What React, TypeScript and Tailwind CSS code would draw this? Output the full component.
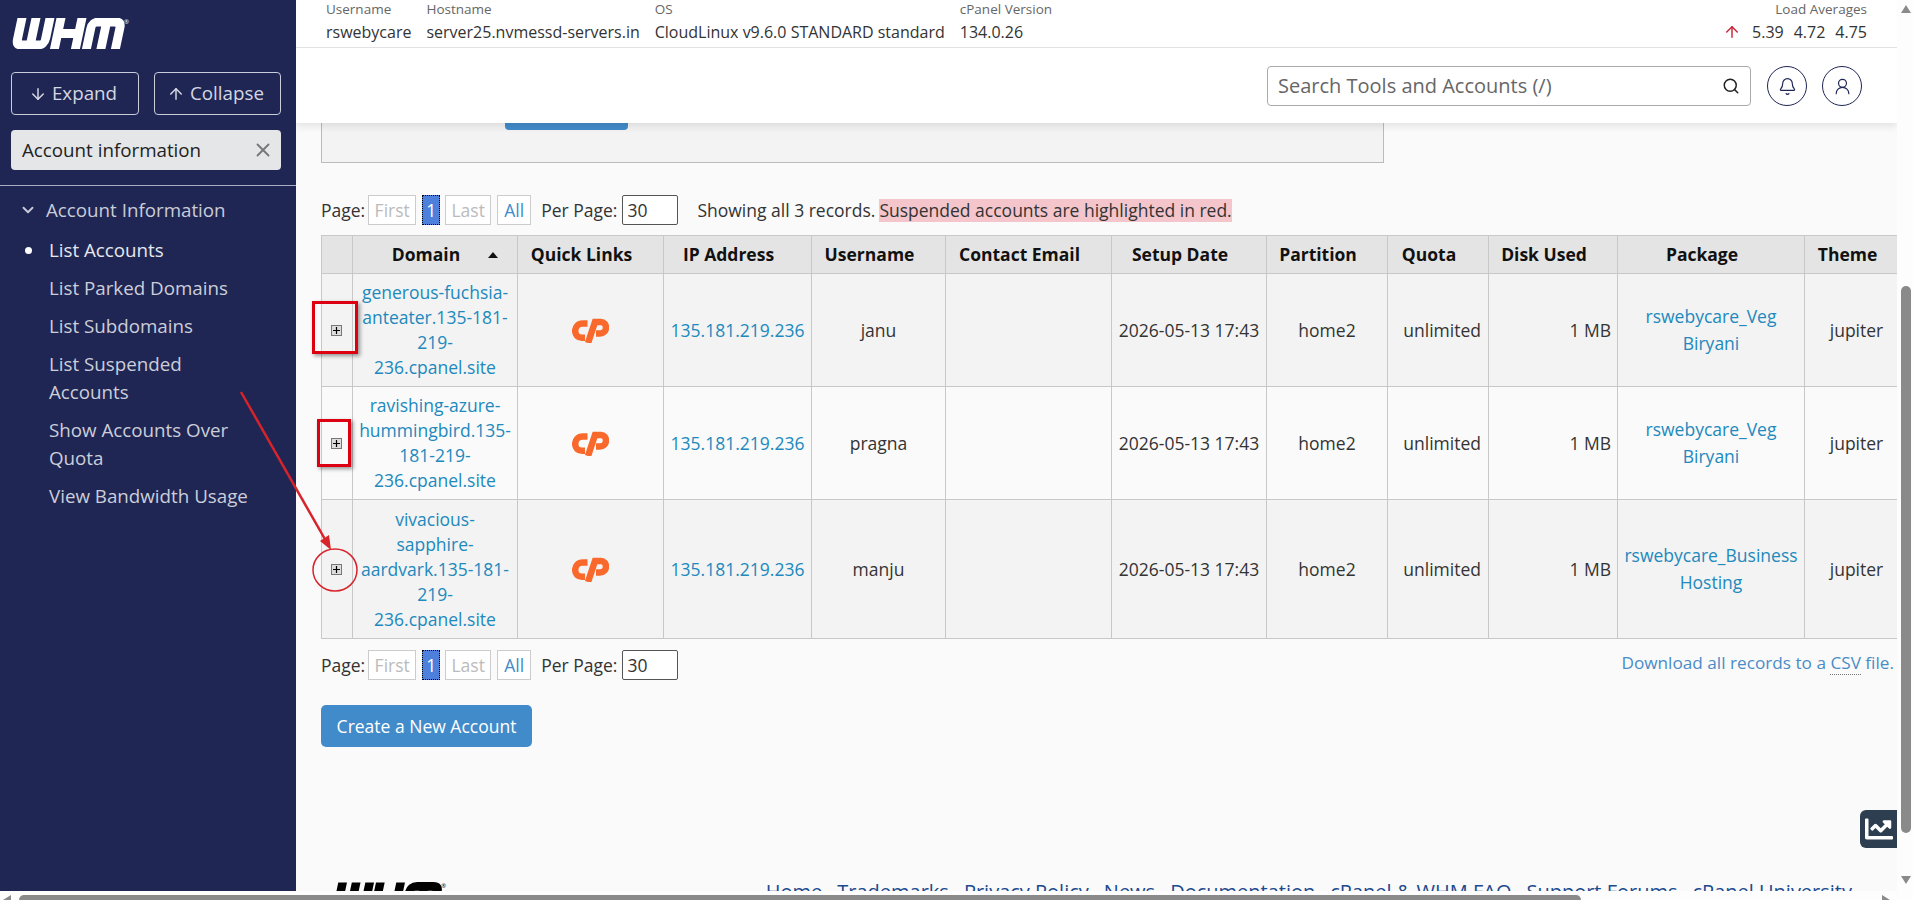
import { ArrowDown, ArrowUp, Bell, ChevronDown, Search, UserRound, X } from "lucide-react"
import { FaChartLine } from "react-icons/fa"

const rows = [
  { domain: "generous-fuchsia-anteater.135-181-219-236.cpanel.site", user: "janu", pkg: "rswebycare_Veg Biryani", bg: "bg-[#f3f3f3]", h: "h-[113px]" },
  { domain: "ravishing-azure-hummingbird.135-181-219-236.cpanel.site", user: "pragna", pkg: "rswebycare_Veg Biryani", bg: "bg-[#fafafa]", h: "h-[113px]" },
  { domain: "vivacious-sapphire-aardvark.135-181-219-236.cpanel.site", user: "manju", pkg: "rswebycare_Business Hosting", bg: "bg-[#f3f3f3]", h: "h-[139px]" },
]

const menu = ["List Parked Domains", "List Subdomains", "List Suspended Accounts", "Show Accounts Over Quota", "View Bandwidth Usage"]
const footerLinks = ["Home", "Trademarks", "Privacy Policy", "News", "Documentation", "cPanel & WHM FAQ", "Support Forums", "cPanel University"]
const stats = [
  { label: "Username", value: "rswebycare" },
  { label: "Hostname", value: "server25.nvmessd-servers.in" },
  { label: "OS", value: "CloudLinux v9.6.0 STANDARD standard" },
  { label: "cPanel Version", value: "134.0.26" },
]

function WhmLogo({ color, className }: { color: string; className: string }) {
  return (
    <svg viewBox="0 0 120 31" className={className} fill="none" stroke={color} strokeWidth="9">
      <g transform="translate(7 0) skewX(-12)">
        <path d="M4 0V21Q4 27 10 27H26Q32 27 32 21V0M18 0V27" />
        <path d="M43 0V31M64 0V31M43 15.5H64" />
        <path d="M75 31V10Q75 4 81 4H98Q104 4 104 10V31M89.5 4V31" />
      </g>
      <text x="113" y="6" fontSize="6" fill={color} stroke="none">®</text>
    </svg>
  )
}

function CpLogo() {
  return (
    <svg viewBox="0 0 37 25" className="mx-auto h-[25px] w-[37px]" fill="none" stroke="#f9692c" strokeWidth="6.5">
      <path d="M15.5 5.5H11C6 5.5 3.2 9 3.2 13C3.2 17 6 19.8 10 19.8H13" />
      <path d="M16 25L23 4H29C32 4 34 6.5 34 9.5C34 13 31.5 15.5 28 15.5H24" />
    </svg>
  )
}

function Pager() {
  return (
    <div className="flex h-[30px] items-center">
      <span className="mr-[3px] text-[#333]">Page:</span>
      <span className="mr-[6px] flex h-[30px] w-[48px] items-center justify-center border border-[#ccc] bg-white text-[#bbb]">First</span>
      <span className="mr-[5px] flex h-[30px] w-[18px] items-center justify-center border border-dotted border-black bg-[#4d7fdd] text-white">1</span>
      <span className="mr-[6px] flex h-[30px] w-[46px] items-center justify-center border border-[#ccc] bg-white text-[#bbb]">Last</span>
      <span className="mr-[10px] flex h-[30px] w-[34px] items-center justify-center border border-[#ccc] bg-white text-[#428bca]">All</span>
      <span className="mr-[5px] text-[#333]">Per Page:</span>
      <span className="flex h-[30px] w-[56px] items-center rounded-[2px] border border-[#555] bg-white pl-[4px] text-[#333]">30</span>
    </div>
  )
}

export default function App() {
  return (
    <div className="relative flex h-[900px] w-[1913px] flex-col overflow-hidden bg-white font-['Open_Sans',sans-serif] text-[17.5px]">
      <div className="flex h-[891px]">
        <aside className="w-[296px] shrink-0 bg-[#1f2654] pt-[18px] text-[18.75px]">
          <WhmLogo color="#ffffff" className="ml-[11px] h-[31px] w-[120px]" />
          <div className="mt-[23px] flex gap-[15px] pl-[11px] text-[#d5d7e2]">
            <button className="flex h-[43px] w-[128px] items-center justify-center gap-[5px] rounded-[4px] border border-[#c9ccda] pr-[4px]">
              <ArrowDown size={18} />Expand
            </button>
            <button className="flex h-[43px] w-[127px] items-center justify-center gap-[5px] rounded-[4px] border border-[#c9ccda] pr-[4px]">
              <ArrowUp size={18} />Collapse
            </button>
          </div>
          <div className="mt-[15px] ml-[11px] flex h-[40px] w-[270px] items-center justify-between rounded-[4px] bg-[#e4e6e8] pr-[7px] pl-[11px] text-[#222]">
            Account information
            <X size={22} className="text-[#777]" />
          </div>
          <div className="mt-[15px] h-px bg-[#a9adc2]" />
          <div className="mt-[10px] flex h-[28px] items-center pl-[19px] text-[#c9ccd8]">
            <ChevronDown size={18} strokeWidth={2.5} className="mr-[9px]" />
            Account Information
          </div>
          <ul className="mt-[7px] text-[#ccced9]">
            <li className="flex py-[5px] pl-[25px] leading-[28px] text-[#e6e7ee]">
              <span className="flex h-[28px] w-[24px] items-center">
                <span className="h-[7px] w-[7px] rounded-full bg-white" />
              </span>
              List Accounts
            </li>
            {menu.map((item) => (
              <li key={item} className="w-[254px] py-[5px] pl-[49px] leading-[28px]">{item}</li>
            ))}
          </ul>
        </aside>

        <main className="flex w-[1601px] flex-col overflow-hidden">
          <header className="relative z-10 h-[123px] shrink-0 bg-white shadow-[0_3px_8px_rgba(0,0,0,0.1)]">
            <div className="flex h-[48px] border-b border-[#e2e2e2] pr-[30px] pl-[30px]">
              {stats.map((s) => (
                <div key={s.label} className="mr-[15px]">
                  <div className="text-[13.5px] leading-[18px] text-[#666]">{s.label}</div>
                  <div className="mt-[2px] text-[16px] leading-[24px] text-[#333]">{s.value}</div>
                </div>
              ))}
              <div className="ml-auto text-right">
                <div className="text-[13.5px] leading-[18px] text-[#666]">Load Averages</div>
                <div className="mt-[2px] flex items-center gap-[10px] text-[16px] leading-[24px] text-[#333]">
                  <ArrowUp size={18} className="mr-[1px] text-[#c8283c]" />
                  <span>5.39</span><span>4.72</span><span>4.75</span>
                </div>
              </div>
            </div>
            <div className="flex justify-end gap-[15px] pt-[18px] pr-[35px]">
              <div className="mr-px flex h-[40px] w-[484px] items-center justify-between rounded-[4px] border border-[#aaa] pr-[10px] pl-[10px] text-[20px] text-[#666]">
                Search Tools and Accounts (/)
                <Search size={18} className="text-[#222]" />
              </div>
              <span className="flex h-[40px] w-[40px] items-center justify-center rounded-full border border-[#1f2654] text-[#1f2654]">
                <Bell size={19} strokeWidth={1.5} />
              </span>
              <span className="flex h-[40px] w-[40px] items-center justify-center rounded-full border border-[#1f2654] text-[#1f2654]">
                <UserRound size={19} strokeWidth={1.5} />
              </span>
            </div>
          </header>

          <div className="flex-1 bg-[#fafafa] pl-[25px]">
            <div className="h-[40px] w-[1063px] border-x border-b border-[#bbb] bg-[#f3f3f3]">
              <div className="ml-[183px] h-[7px] w-[123px] rounded-b-[4px] bg-[#428bca]" />
            </div>

            <div className="mt-[32px] flex items-center">
              <Pager />
              <span className="ml-[19px] text-[#333]">Showing all 3 records.</span>
              <span className="ml-[4px] inline-block bg-[#f4c6cb] leading-[23px] text-[#333]">Suspended accounts are highlighted in red.</span>
            </div>

            <table className="mt-[10px] w-[1587px] table-fixed border-collapse text-center text-[#333]">
              <colgroup>
                <col className="w-[31px]" /><col className="w-[165px]" /><col className="w-[146px]" /><col className="w-[148px]" />
                <col className="w-[134px]" /><col className="w-[166px]" /><col className="w-[155px]" /><col className="w-[121px]" />
                <col className="w-[101px]" /><col className="w-[129px]" /><col className="w-[187px]" /><col className="w-[104px]" />
              </colgroup>
              <thead>
                <tr className="h-[38px] bg-[#e4e4e4] font-bold text-[#111]">
                  <th className="border border-[#c8c8c8]" />
                  <th className="relative border border-[#c8c8c8] pr-[18px]">
                    Domain
                    <svg viewBox="0 0 10 6" className="absolute top-[16px] right-[19px] h-[6px] w-[10px]" fill="#111"><path d="M5 0L10 6H0Z" /></svg>
                  </th>
                  {["Quick Links", "IP Address", "Username", "Contact Email", "Setup Date", "Partition", "Quota", "Disk Used", "Package", "Theme"].map((h) => (
                    <th key={h} className="border border-[#c8c8c8] pr-[18px]">{h}</th>
                  ))}
                </tr>
              </thead>
              <tbody>
                {rows.map((r) => (
                  <tr key={r.user} className={`${r.bg} ${r.h}`}>
                    <td className="border border-[#c8c8c8] pr-[2px]">
                      <span className="mx-auto flex h-[11px] w-[11px] items-center justify-center border border-[#777] bg-[#ddd]">
                        <svg viewBox="0 0 7 7" className="h-[7px] w-[7px]" stroke="#000" strokeWidth="1.2"><path d="M3.5 0V7M0 3.5H7" /></svg>
                      </span>
                    </td>
                    <td className="border border-[#c8c8c8] px-[6px] py-[6px] leading-[25px] text-[#2189bd]">{r.domain}</td>
                    <td className="border border-[#c8c8c8]"><CpLogo /></td>
                    <td className="border border-[#c8c8c8] text-[#2189bd]">135.181.219.236</td>
                    <td className="border border-[#c8c8c8]">{r.user}</td>
                    <td className="border border-[#c8c8c8]" />
                    <td className="border border-[#c8c8c8]">2026-05-13 17:43</td>
                    <td className="border border-[#c8c8c8]">home2</td>
                    <td className="border border-[#c8c8c8] pr-[7px] text-right">unlimited</td>
                    <td className="border border-[#c8c8c8] pr-[6px] text-right">1 MB</td>
                    <td className="border border-[#c8c8c8] px-[6px] leading-[27px] text-[#2189bd]">{r.pkg}</td>
                    <td className="border border-[#c8c8c8]">jupiter</td>
                  </tr>
                ))}
              </tbody>
            </table>

            <div className="mt-[11px] flex w-[1573px] items-center justify-between">
              <Pager />
              <span className="-mt-[5px] text-[17.2px] text-[#4a8cc6]">
                Download all records to a <span className="border-b border-dotted border-[#777]">CSV</span> file.
              </span>
            </div>

            <button className="mt-[25px] flex h-[42px] w-[211px] items-center justify-center rounded-[5px] bg-[#428bca] text-white">
              Create a New Account
            </button>

            <div className="mt-[135px] ml-[11px] flex w-[1520px] justify-between">
              <WhmLogo color="#000000" className="h-[31px] w-[116px]" />
              <div className="-mt-[5px] flex gap-[15px] text-[20px] text-[#1b4a8f]">
                {footerLinks.map((l) => <span key={l}>{l}</span>)}
              </div>
            </div>
          </div>
        </main>

        <div className="flex w-[16px] flex-col bg-[#fdfdfd]">
          <svg viewBox="0 0 10 8" className="mt-[5px] ml-[4px] h-[8px] w-[10px]" fill="#8a8a8a"><path d="M5 0L10 8H0Z" /></svg>
          <div className="mt-[273px] ml-[4px] h-[547px] w-[10px] rounded-[5px] bg-[#8a8a8a]" />
          <svg viewBox="0 0 10 8" className="mt-[43px] ml-[4px] h-[8px] w-[10px]" fill="#8a8a8a"><path d="M5 8L10 0H0Z" /></svg>
        </div>
      </div>

      <div className="flex h-[9px] items-start bg-[#fdfdfd] pt-[4px]">
        <svg viewBox="0 0 8 10" className="ml-[3px] h-[10px] w-[8px]" fill="#8a8a8a"><path d="M0 5L8 0V10Z" /></svg>
        <div className="ml-[8px] h-[8px] w-[1562px] rounded-t-[5px] bg-[#8a8a8a]" />
        <svg viewBox="0 0 8 10" className="ml-[301px] h-[10px] w-[8px]" fill="#8a8a8a"><path d="M8 5L0 0V10Z" /></svg>
      </div>

      {/* chart widget + the red marks drawn on top of the screenshot */}
      <div className="absolute top-[810px] left-[1860px] flex h-[38px] w-[37px] items-center justify-center rounded-l-[6px] bg-[#2c3e50] text-white">
        <FaChartLine size={28} />
      </div>
      <div className="absolute top-[301px] left-[312px] h-[53px] w-[46px] border-[3px] border-[#dd0010] shadow-[2px_2px_4px_rgba(0,0,0,0.4)]" />
      <div className="absolute top-[419px] left-[317px] h-[48px] w-[34px] border-[3px] border-[#dd0010] shadow-[2px_2px_4px_rgba(0,0,0,0.4)]" />
      <svg className="pointer-events-none absolute top-0 left-0 h-[900px] w-[1913px]" viewBox="0 0 1913 900" fill="none">
        <ellipse cx="335" cy="570" rx="22" ry="21" stroke="#d8232a" strokeWidth="1.5" />
        <path d="M241 392L326 541" stroke="#d8232a" strokeWidth="2.5" />
        <path d="M331 550L320 541L329 535Z" fill="#d8232a" />
      </svg>
    </div>
  )
}
